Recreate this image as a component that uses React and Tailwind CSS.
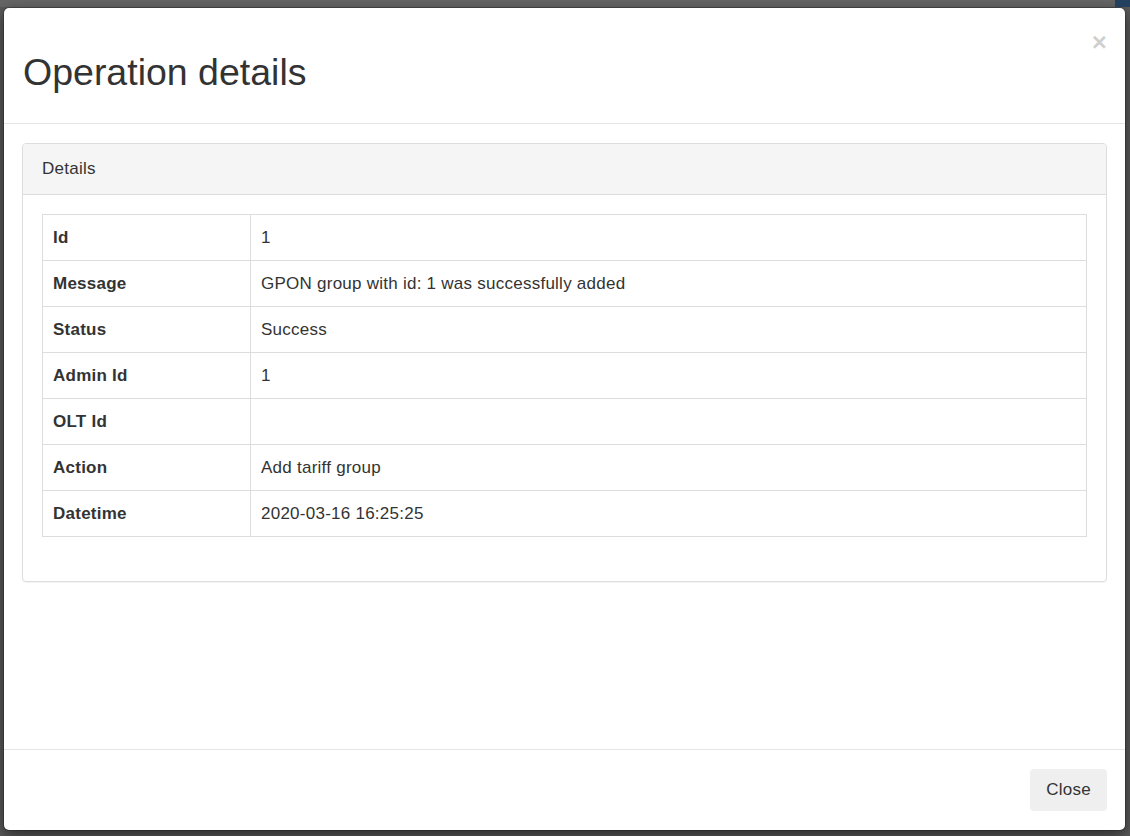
const rows = [
  ['Id', '1'],
  ['Message', 'GPON group with id: 1 was successfully added'],
  ['Status', 'Success'],
  ['Admin Id', '1'],
  ['OLT Id', ''],
  ['Action', 'Add tariff group'],
  ['Datetime', '2020-03-16 16:25:25'],
];

export default function App() {
  return (
    <div className="w-[1130px] h-[836px] bg-[#5b5b5b] overflow-hidden text-[#333] font-['Liberation_Sans',Helvetica,Arial,sans-serif]">
      <div className="flex justify-end h-[7px] bg-[#666]">
        <div className="w-[15px] h-full bg-[#23405e]" />
      </div>
      <div className="pl-[3px]">
        <div className="w-[1123px] h-[824px] flex flex-col bg-white rounded-[6px] border border-black/20 shadow-[0_5px_15px_rgba(0,0,0,0.5)] bg-clip-padding">
          {/* header */}
          <div className="h-[116px] flex justify-between border-b border-[#e5e5e5] pl-[19px] pr-[18px]">
            <h1 className="pt-[44px] text-[37.5px] leading-[41px] font-normal">Operation details</h1>
            <button className="mt-[19px] h-[30px] text-[26px] leading-[30px] font-bold text-black/20">×</button>
          </div>

          {/* body */}
          <div className="flex-1 px-[18px] pt-[19px]">
            <div className="border border-[#ddd] rounded-[4px] shadow-[0_1px_1px_rgba(0,0,0,0.05)]">
              <div className="h-[51px] flex items-center px-[19px] bg-[#f5f5f5] border-b border-[#ddd] rounded-t-[3px] text-[17px] tracking-[0.25px]">
                Details
              </div>
              <div className="px-[19px] pt-[19px] pb-[44px]">
                <table className="w-full border-collapse border border-[#ddd] text-[17px] tracking-[0.25px]">
                  <tbody>
                    {rows.map(([label, value]) => (
                      <tr key={label} className="h-[46px]">
                        <td className="w-[208px] border border-[#ddd] px-[10px] font-bold">{label}</td>
                        <td className="border border-[#ddd] px-[10px]">{value}</td>
                      </tr>
                    ))}
                  </tbody>
                </table>
              </div>
            </div>
          </div>

          {/* footer */}
          <div className="border-t border-[#e5e5e5] h-[81px] flex items-center justify-end pr-[18px]">
            <button className="w-[77px] h-[42px] rounded-[4px] bg-[#efefef] text-[17px] tracking-[0.25px] text-[#333]">Close</button>
          </div>
        </div>
      </div>
    </div>
  );
}
